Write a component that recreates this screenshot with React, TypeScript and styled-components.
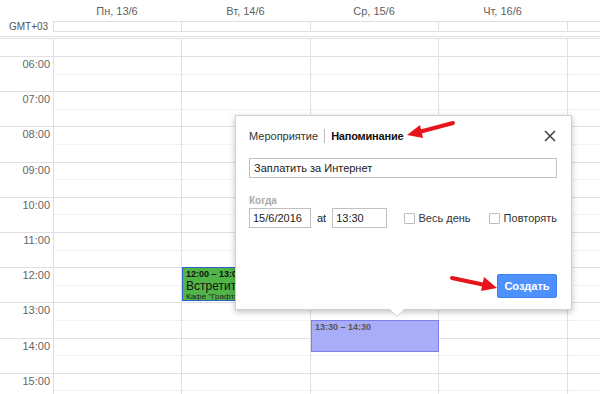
import React from "react";
import styled, { createGlobalStyle } from "styled-components";

const HOUR = 35.2;
const FIRST = 17;
const COLS = "53px 128px 129px 128px 129px 1fr";

const GlobalStyle = createGlobalStyle`
  html, body {
    margin: 0;
    padding: 0;
    background: #fff;
  }
  body {
    font-family: "Liberation Sans", Arial, sans-serif;
  }
`;

const Page = styled.div`
  position: relative;
  width: 600px;
  height: 394px;
  overflow: hidden;
  background: #fff;
`;

const HeaderRow = styled.div`
  display: grid;
  grid-template-columns: ${COLS};
  height: 21px;
`;

const DayLabel = styled.div`
  font-size: 11px;
  color: #5f5f5f;
  text-align: center;
  padding-top: 5px;
`;

const AllDayRow = styled.div`
  display: grid;
  grid-template-columns: ${COLS};
  height: 11px;
  margin-bottom: 4px;
`;

const Zone = styled.div`
  font-size: 10px;
  color: #555;
  line-height: 11px;
  padding-left: 9px;
`;

const AllDayCell = styled.div`
  border: 1px solid #e0e0e0;
  border-right: none;
`;

const Body = styled.div`
  display: grid;
  grid-template-columns: ${COLS};
  border-top: 3px double #e0e0e0;
  height: 360px;
  overflow: hidden;
`;

const Gutter = styled.div`
  display: flex;
  flex-direction: column;
`;

const DayColumn = styled.div`
  position: relative;
  display: flex;
  flex-direction: column;
  border-left: 1px solid #e0e0e0;
`;

const FirstSlot = styled.div`
  height: ${FIRST}px;
  flex-shrink: 0;
`;

const HourLabel = styled.div`
  height: ${HOUR}px;
  flex-shrink: 0;
  box-sizing: border-box;
  border-top: 1px solid #e0e0e0;
  text-align: right;
  padding: 1px 3px 0 0;
  font-size: 11px;
  color: #666;
`;

const HourSlot = styled.div`
  position: relative;
  height: ${HOUR}px;
  flex-shrink: 0;
  box-sizing: border-box;
  border-top: 1px solid #e0e0e0;

  &::after {
    content: "";
    position: absolute;
    left: 0;
    right: 0;
    top: ${HOUR / 2 - 1}px;
    border-top: 1px dotted #e6e6e6;
  }
`;

const Event = styled.div<{ $bg: string; $border: string }>`
  position: absolute;
  box-sizing: border-box;
  background: ${(p) => p.$bg};
  border: 1px solid ${(p) => p.$border};
  padding: 1px 3px;
  overflow: hidden;
  white-space: nowrap;
  z-index: 1;
`;

const EventTime = styled.div<{ $color: string }>`
  font-size: 9px;
  font-weight: bold;
  color: ${(p) => p.$color};
  line-height: 11px;
`;

const EventTitle = styled.div`
  font-size: 12px;
  color: #111;
  line-height: 12px;
`;

const EventPlace = styled.div`
  font-size: 8px;
  color: #222;
  line-height: 9px;
`;

const Popup = styled.div`
  position: absolute;
  left: 235px;
  top: 115px;
  width: 337px;
  height: 195px;
  box-sizing: border-box;
  background: #fff;
  border: 1px solid #d0d0d0;
  box-shadow: 0 2px 6px rgba(0, 0, 0, 0.25);
  padding: 13px 14px 0 13px;
  z-index: 5;
  display: flex;
  flex-direction: column;
  font-size: 11px;

  &::before,
  &::after {
    content: "";
    position: absolute;
    left: 153px;
    border-left: 8px solid transparent;
    border-right: 8px solid transparent;
  }
  &::before {
    bottom: -8px;
    border-top: 8px solid #cfcfcf;
  }
  &::after {
    bottom: -7px;
    border-top: 8px solid #fff;
  }
`;

const TabRow = styled.div`
  display: flex;
  align-items: center;
  height: 14px;
  color: #222;
`;

const Tab = styled.span<{ $active?: boolean }>`
  font-weight: ${(p) => (p.$active ? "bold" : "normal")};
  color: ${(p) => (p.$active ? "#111" : "#333")};
  letter-spacing: ${(p) => (p.$active ? "-0.2px" : "0")};
`;

const TabDivider = styled.span`
  width: 1px;
  height: 14px;
  background: #bbb;
  margin: 0 6px;
`;

const Close = styled.button`
  margin-left: auto;
  margin-right: 1px;
  border: none;
  background: none;
  padding: 0;
  width: 12px;
  height: 12px;
  display: flex;
`;

const TitleInput = styled.div`
  margin-top: 15px;
  height: 20px;
  box-sizing: border-box;
  border: 1px solid #c0c0c0;
  color: #222;
  padding: 2px 4px 0;
  line-height: 15px;
`;

const WhenLabel = styled.div`
  margin-top: 17px;
  font-size: 10px;
  font-weight: bold;
  color: #aaa;
  line-height: 12px;
`;

const WhenRow = styled.div`
  margin-top: 1px;
  display: flex;
  align-items: center;
  height: 20px;
  color: #222;
  white-space: nowrap;
`;

const Field = styled.div<{ $w: number }>`
  width: ${(p) => p.$w}px;
  height: 20px;
  box-sizing: border-box;
  border: 1px solid #c0c0c0;
  padding: 2px 3px 0;
  line-height: 15px;
`;

const At = styled.span`
  margin: 0 6px;
`;

const Check = styled.label<{ $gap: number }>`
  display: flex;
  align-items: center;
  margin-left: ${(p) => p.$gap}px;
  gap: 4px;
  color: #333;
`;

const Box = styled.span`
  width: 11px;
  height: 11px;
  box-sizing: border-box;
  border: 1px solid #bbb;
  border-radius: 1px;
`;

const Footer = styled.div`
  margin-top: 46px;
  display: flex;
  justify-content: flex-end;
`;

const CreateButton = styled.button`
  width: 60px;
  height: 24px;
  background: #4d90fe;
  border: 1px solid #3f83f0;
  border-radius: 2px;
  color: #fff;
  font-family: inherit;
  font-size: 11px;
  font-weight: bold;
  padding: 0;
`;

const Arrows = styled.svg`
  position: absolute;
  left: 0;
  top: 0;
  width: 600px;
  height: 394px;
  z-index: 10;
  pointer-events: none;
`;

const days = ["Пн, 13/6", "Вт, 14/6", "Ср, 15/6", "Чт, 16/6", ""];
const hours = [6, 7, 8, 9, 10, 11, 12, 13, 14, 15];

const topFor = (h: number) => FIRST + (h - 6) * HOUR;

const Column: React.FC<{ index: number }> = ({ index }) => (
  <DayColumn>
    <FirstSlot />
    {hours.map((h) => (
      <HourSlot key={h} />
    ))}
    {index === 1 && (
      <Event
        $bg="#51b548"
        $border="#2f5fc9"
        style={{ top: topFor(12), left: 0, width: 118, height: 34 }}
      >
        <EventTime $color="#111">12:00 – 13:00</EventTime>
        <EventTitle>Встретиться</EventTitle>
        <EventPlace>Кафе "Графтио"</EventPlace>
      </Event>
    )}
    {index === 2 && (
      <Event
        $bg="#a9acf6"
        $border="#7b7fe9"
        style={{ top: topFor(13.5) - 0.5, left: 0, width: 128, height: 32 }}
      >
        <EventTime $color="#555">13:30 – 14:30</EventTime>
      </Event>
    )}
  </DayColumn>
);

export default function App() {
  return (
    <Page>
      <GlobalStyle />
      <HeaderRow>
        <div />
        {days.map((d, i) => (
          <DayLabel key={i}>{d}</DayLabel>
        ))}
      </HeaderRow>
      <AllDayRow>
        <Zone>GMT+03</Zone>
        {days.map((_, i) => (
          <AllDayCell key={i} />
        ))}
      </AllDayRow>
      <Body>
        <Gutter>
          <FirstSlot />
          {hours.map((h) => (
            <HourLabel key={h}>{String(h).padStart(2, "0")}:00</HourLabel>
          ))}
        </Gutter>
        {days.map((_, i) => (
          <Column key={i} index={i} />
        ))}
      </Body>

      <Popup>
        <TabRow>
          <Tab>Мероприятие</Tab>
          <TabDivider />
          <Tab $active>Напоминание</Tab>
          <Close aria-label="close">
            <svg width="12" height="12" viewBox="0 0 12 12">
              <path d="M1 1 L11 11 M11 1 L1 11" stroke="#444" strokeWidth="1.6" />
            </svg>
          </Close>
        </TabRow>
        <TitleInput>Заплатить за Интернет</TitleInput>
        <WhenLabel>Когда</WhenLabel>
        <WhenRow>
          <Field $w={65}>15/6/2016</Field>
          <At>at</At>
          <Field $w={57}>13:30</Field>
          <Check $gap={17}>
            <Box />
            Весь день
          </Check>
          <Check $gap={18}>
            <Box />
            Повторять
          </Check>
        </WhenRow>
        <Footer>
          <CreateButton>Создать</CreateButton>
        </Footer>
      </Popup>

      <Arrows viewBox="0 0 600 394">
        <line x1="453" y1="123" x2="419" y2="132" stroke="#e8141b" strokeWidth="4" strokeLinecap="round" />
        <polygon points="407,135 423,138 420,125" fill="#e8141b" />
        <line x1="452" y1="278" x2="485" y2="285" stroke="#e8141b" strokeWidth="4" strokeLinecap="round" />
        <polygon points="497,288 481,291 484,277" fill="#e8141b" />
      </Arrows>
    </Page>
  );
}
